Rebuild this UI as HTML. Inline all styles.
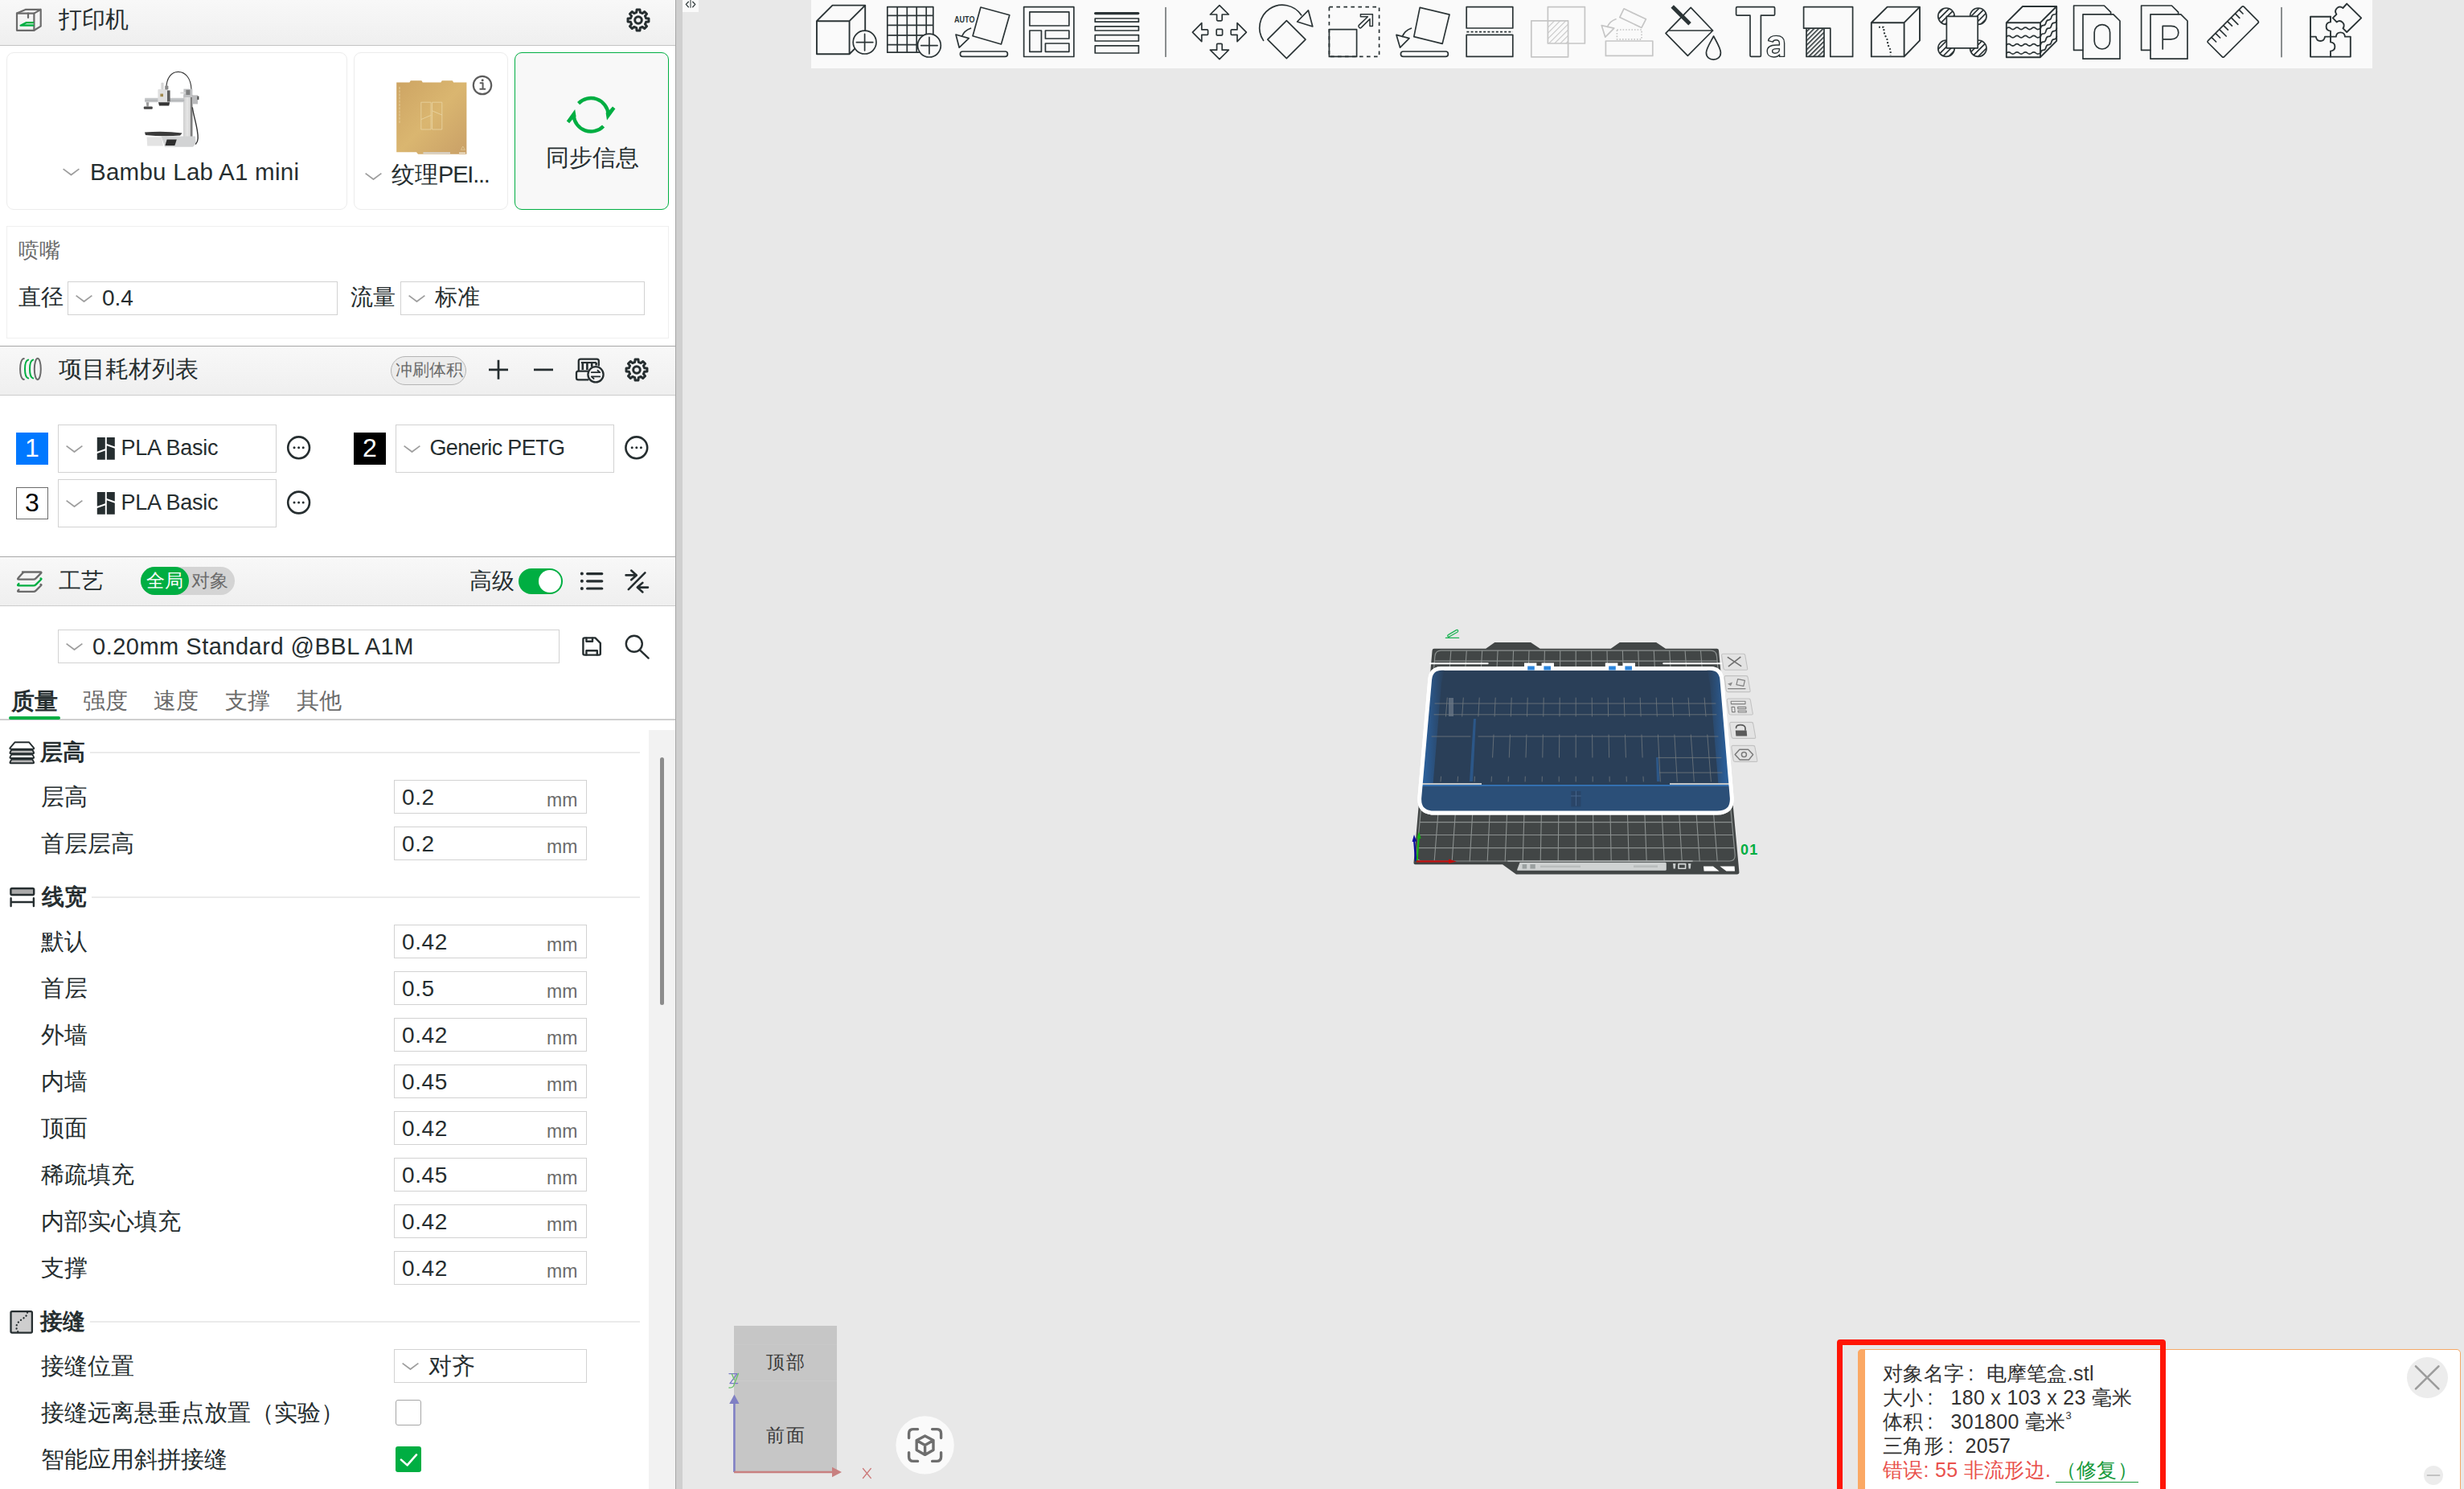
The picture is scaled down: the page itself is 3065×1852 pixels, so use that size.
<!DOCTYPE html>
<html lang="zh">
<head>
<meta charset="utf-8">
<title>Bambu Studio</title>
<style>
html,body{margin:0;padding:0}
body{width:3065px;height:1852px;overflow:hidden;position:relative;background:#e8e8e8;font-family:"Liberation Sans",sans-serif;color:#262e30}
.a{position:absolute;box-sizing:border-box}
.t{position:absolute;white-space:nowrap;line-height:1;font-size:28.6px;color:#262e30}
.g{color:#6b6b6b}
.hd{position:absolute;left:0;width:840px;background:linear-gradient(#f8f8f8,#efefef);box-sizing:border-box}
.box{position:absolute;box-sizing:border-box;border:1.5px solid #d2d2d2;background:#fff}
.card{position:absolute;box-sizing:border-box;border:1.5px solid #ececec;border-radius:9px;background:#fff}
.mm{position:absolute;white-space:nowrap;line-height:1;font-size:23px;color:#6b6b6b}
.v{letter-spacing:0.6px;font-size:28px}
.b{font-weight:bold}
.n{font-size:25px;color:#323232;letter-spacing:0.3px}
.cl{margin-left:5px}
svg{position:absolute;left:0;top:0;overflow:visible}
</style>
</head>
<body>
<!-- ===== LEFT PANEL BACKGROUND ===== -->
<div class="a" id="panel" style="left:0;top:0;width:840px;height:1852px;background:#fff"></div>
<div class="a" style="left:840px;top:0;width:1.2px;height:1852px;background:#a6a6a6"></div>
<div class="a" style="left:841.2px;top:0;width:7.8px;height:1852px;background:#cfcfcf"></div>
<div class="a" style="left:849px;top:0;width:20px;height:14.8px;background:#fafafa"></div>

<!-- header 1 -->
<div class="hd" style="top:0;height:57px;border-bottom:1.5px solid #c4c4c4"></div>
<!-- header 2 -->
<div class="hd" style="top:430px;height:62px;border-top:1.5px solid #a8a8a8;border-bottom:1.5px solid #cccccc"></div>
<!-- header 3 -->
<div class="hd" style="top:692px;height:62px;border-top:1.5px solid #a8a8a8;border-bottom:1.5px solid #cccccc"></div>

<!-- printer cards -->
<div class="card" style="left:8px;top:65px;width:424px;height:196px"></div>
<div class="card" style="left:440px;top:65px;width:192px;height:196px"></div>
<div class="card" style="left:640px;top:65px;width:192px;height:196px;border:1.8px solid #00ae42;background:#f8f8f8"></div>
<!-- nozzle box -->
<div class="a" style="left:8px;top:281px;width:824px;height:140px;border:1.5px solid #efefef;background:#fff"></div>
<div class="box" style="left:84px;top:350px;width:336px;height:42px"></div>
<div class="box" style="left:498px;top:350px;width:304px;height:42px"></div>

<!-- filament rows -->
<div class="a" style="left:20px;top:538px;width:40px;height:40px;background:#0078ff"></div>
<div class="box" style="left:72px;top:528px;width:272px;height:60px"></div>
<div class="a" style="left:440px;top:538px;width:40px;height:40px;background:#000"></div>
<div class="box" style="left:492px;top:528px;width:272px;height:60px"></div>
<div class="a" style="left:20px;top:606px;width:40px;height:40px;background:#fff;border:1.5px solid #6b6b6b"></div>
<div class="box" style="left:72px;top:596px;width:272px;height:60px"></div>

<!-- pills / toggles -->
<div class="a" style="left:486px;top:443px;width:94px;height:36px;border-radius:18px;border:1.5px solid #b4b4b4;background:#ececec"></div>
<div class="a" style="left:175px;top:705px;width:117px;height:35px;border-radius:18px;background:#d4d4d4"></div>
<div class="a" style="left:175px;top:705px;width:60px;height:35px;border-radius:18px;background:#00ae42"></div>
<div class="a" style="left:645px;top:707px;width:55px;height:32px;border-radius:16px;background:#00ae42"></div>
<div class="a" style="left:670px;top:709px;width:28px;height:28px;border-radius:14px;background:#fff"></div>

<!-- preset combo -->
<div class="box" style="left:72px;top:783px;width:624px;height:42px"></div>

<!-- tabs -->
<div class="a" style="left:0;top:894px;width:840px;height:2px;background:#cfcfcf"></div>
<div class="a" style="left:11px;top:891px;width:64px;height:4px;border-radius:2px;background:#00ae42"></div>

<!-- scroll track -->
<div class="a" style="left:807px;top:908px;width:33px;height:944px;background:#f2f2f2"></div>
<div class="a" style="left:821px;top:942px;width:5px;height:308px;border-radius:3px;background:#8c8c8c"></div>

<!-- section lines -->
<div class="a" style="left:112px;top:935px;width:684px;height:1.5px;background:#ebebeb"></div>
<div class="a" style="left:114px;top:1115px;width:682px;height:1.5px;background:#ebebeb"></div>
<div class="a" style="left:112px;top:1643px;width:684px;height:1.5px;background:#ebebeb"></div>

<!-- value boxes -->
<div class="box" style="left:490px;top:970px;width:240px;height:42px"></div>
<div class="box" style="left:490px;top:1028px;width:240px;height:42px"></div>
<div class="box" style="left:490px;top:1150px;width:240px;height:42px"></div>
<div class="box" style="left:490px;top:1208px;width:240px;height:42px"></div>
<div class="box" style="left:490px;top:1266px;width:240px;height:42px"></div>
<div class="box" style="left:490px;top:1324px;width:240px;height:42px"></div>
<div class="box" style="left:490px;top:1382px;width:240px;height:42px"></div>
<div class="box" style="left:490px;top:1440px;width:240px;height:42px"></div>
<div class="box" style="left:490px;top:1498px;width:240px;height:42px"></div>
<div class="box" style="left:490px;top:1556px;width:240px;height:42px"></div>
<div class="box" style="left:490px;top:1678px;width:240px;height:42px"></div>
<!-- checkboxes -->
<div class="a" style="left:492px;top:1741px;width:32px;height:32px;border:1.5px solid #a6a6a6;border-radius:3px;background:#fff"></div>
<div class="a" style="left:492px;top:1799px;width:32px;height:32px;border-radius:3px;background:#00ae42"></div>

<!-- ===== PANEL TEXT ===== -->
<div class="t" style="left:73px;top:10px;font-size:28.5px">打印机</div>
<div class="t" style="left:112px;top:198.5px;font-size:29.5px;letter-spacing:0.26px" id="tx_printer">Bambu Lab A1 mini</div>
<div class="t" style="left:487px;top:203px;font-size:29px" id="tx_plate">纹理<span style="letter-spacing:-1.2px">PEI...</span></div>
<div class="t" style="left:679px;top:182px;font-size:28.5px">同步信息</div>
<div class="t g" style="left:23px;top:298px;font-size:26px">喷嘴</div>
<div class="t" style="left:23px;top:356px;font-size:28px">直径</div>
<div class="t" style="left:127px;top:357px;font-size:28px" id="tx_04">0.4</div>
<div class="t" style="left:436px;top:356px;font-size:28px">流量</div>
<div class="t" style="left:541px;top:356px;font-size:28px">标准</div>

<div class="t" style="left:73px;top:445px;font-size:28.7px">项目耗材列表</div>
<div class="t g" style="left:492px;top:450px;font-size:20.5px">冲刷体积</div>

<div class="t" style="left:20px;top:541px;width:40px;text-align:center;font-size:32px;color:#fff">1</div>
<div class="t" style="left:440px;top:541px;width:40px;text-align:center;font-size:32px;color:#fff">2</div>
<div class="t" style="left:20px;top:609px;width:40px;text-align:center;font-size:32px;color:#000">3</div>
<div class="t" style="left:150.5px;top:544.4px;font-size:27px;letter-spacing:-0.25px" id="tx_pla1">PLA Basic</div>
<div class="t" style="left:534.5px;top:544.4px;font-size:27px;letter-spacing:-0.65px" id="tx_petg">Generic PETG</div>
<div class="t" style="left:150.5px;top:612.4px;font-size:27px;letter-spacing:-0.25px" id="tx_pla3">PLA Basic</div>

<div class="t" style="left:73px;top:709px;font-size:28px">工艺</div>
<div class="t" style="left:182px;top:711px;font-size:23px;color:#fff">全局</div>
<div class="t g" style="left:238px;top:711px;font-size:23px">对象</div>
<div class="t" style="left:584px;top:709px;font-size:28px">高级</div>

<div class="t" style="left:115px;top:789.5px;font-size:29px;letter-spacing:0.5px" id="tx_preset">0.20mm Standard @BBL A1M</div>

<div class="t b" style="left:14px;top:858px;font-size:28.5px">质量</div>
<div class="t g" style="left:103px;top:858px;font-size:28px">强度</div>
<div class="t g" style="left:191px;top:858px;font-size:28px">速度</div>
<div class="t g" style="left:280px;top:858px;font-size:28px">支撑</div>
<div class="t g" style="left:369px;top:858px;font-size:28px">其他</div>

<div class="t b" style="left:50px;top:922px;font-size:28px">层高</div>
<div class="t b" style="left:52px;top:1102px;font-size:28px">线宽</div>
<div class="t b" style="left:50px;top:1630px;font-size:28px">接缝</div>

<div class="t" style="left:51px;top:977px">层高</div>
<div class="t" style="left:51px;top:1035px">首层层高</div>
<div class="t" style="left:51px;top:1157px">默认</div>
<div class="t" style="left:51px;top:1215px">首层</div>
<div class="t" style="left:51px;top:1273px">外墙</div>
<div class="t" style="left:51px;top:1331px">内墙</div>
<div class="t" style="left:51px;top:1389px">顶面</div>
<div class="t" style="left:51px;top:1447px">稀疏填充</div>
<div class="t" style="left:51px;top:1505px">内部实心填充</div>
<div class="t" style="left:51px;top:1563px">支撑</div>
<div class="t" style="left:51px;top:1685px">接缝位置</div>
<div class="t" style="left:51px;top:1743px">接缝远离悬垂点放置（实验）</div>
<div class="t" style="left:51px;top:1801px">智能应用斜拼接缝</div>

<div class="t v" style="left:500px;top:978px">0.2</div><div class="mm" style="left:680px;top:984px">mm</div>
<div class="t v" style="left:500px;top:1036px">0.2</div><div class="mm" style="left:680px;top:1042px">mm</div>
<div class="t v" style="left:500px;top:1158px">0.42</div><div class="mm" style="left:680px;top:1164px">mm</div>
<div class="t v" style="left:500px;top:1216px">0.5</div><div class="mm" style="left:680px;top:1222px">mm</div>
<div class="t v" style="left:500px;top:1274px">0.42</div><div class="mm" style="left:680px;top:1280px">mm</div>
<div class="t v" style="left:500px;top:1332px">0.45</div><div class="mm" style="left:680px;top:1338px">mm</div>
<div class="t v" style="left:500px;top:1390px">0.42</div><div class="mm" style="left:680px;top:1396px">mm</div>
<div class="t v" style="left:500px;top:1448px">0.45</div><div class="mm" style="left:680px;top:1454px">mm</div>
<div class="t v" style="left:500px;top:1506px">0.42</div><div class="mm" style="left:680px;top:1512px">mm</div>
<div class="t v" style="left:500px;top:1564px">0.42</div><div class="mm" style="left:680px;top:1570px">mm</div>
<div class="t" style="left:533px;top:1685px">对齐</div>

<!--PANEL-ICONS-START-->
<svg width="3065" height="1852" viewBox="0 0 3065 1852" fill="none" stroke-linecap="round" stroke-linejoin="round">
<defs>
<path id="chev" d="M0.6 0.6 L10.5 8 L20.4 0.6" stroke="#9e9e9e" stroke-width="1.8" fill="none" stroke-linecap="butt"/>
<g id="gear" stroke="#262e30" stroke-width="3" fill="none">
<path d="M-2.31 -9.63 L-1.94 -12.96 L1.94 -12.96 L2.31 -9.63 L5.17 -8.44 L7.79 -10.53 L10.53 -7.79 L8.44 -5.17 L9.63 -2.31 L12.96 -1.94 L12.96 1.94 L9.63 2.31 L8.44 5.17 L10.53 7.79 L7.79 10.53 L5.17 8.44 L2.31 9.63 L1.94 12.96 L-1.94 12.96 L-2.31 9.63 L-5.17 8.44 L-7.79 10.53 L-10.53 7.79 L-8.44 5.17 L-9.63 2.31 L-12.96 1.94 L-12.96 -1.94 L-9.63 -2.31 L-8.44 -5.17 L-10.53 -7.79 L-7.79 -10.53 L-5.17 -8.44 Z"/>
<circle cx="0" cy="0" r="4.3"/>
</g>
<g id="more" stroke="#262e30" fill="none">
<circle cx="0" cy="0" r="13.4" stroke-width="2.6"/>
<circle cx="-5.6" cy="0" r="1.5" fill="#262e30" stroke="none"/>
<circle cx="0" cy="0" r="1.5" fill="#262e30" stroke="none"/>
<circle cx="5.6" cy="0" r="1.5" fill="#262e30" stroke="none"/>
</g>
<g id="bbl" fill="#262e30" stroke="none">
<path d="M0 0 h10 v14.2 l-10 3.6 z M12 0 h10 v11.6 l-10 -3.6 z M0 20 l10 -3.6 v11.4 h-10 z M12 10.2 l10 3.6 v14 h-10 z"/>
</g>
</defs>

<!-- header 1: printer icon -->
<g stroke="#6b6b6b" stroke-width="2.2">
<path d="M21 16.6 H42.4 V37.8 H21 Z"/>
<path d="M21 16.6 L31.6 11.9 H50.7 V32.6 L42.4 37.8 M42.4 16.6 L50.7 11.9"/>
<path d="M35 16.6 V22"/>
</g>
<path d="M41.4 28 H32.9 L25.6 31.7 H41.4" stroke="#00ae42" stroke-width="2.2" fill="#a8e0bd"/>
<use href="#gear" x="794" y="25"/>

<!-- chevrons -->
<use href="#chev" x="78" y="209.5"/>
<use href="#chev" x="454" y="215"/>
<use href="#chev" x="94" y="367"/>
<use href="#chev" x="508" y="367"/>
<use href="#chev" x="82" y="554"/>
<use href="#chev" x="502" y="554"/>
<use href="#chev" x="82" y="622"/>
<use href="#chev" x="82" y="800"/>
<use href="#chev" x="500" y="1695"/>

<!-- info icon -->
<circle cx="600" cy="106" r="11.2" stroke="#5c5c5c" stroke-width="2.2"/>
<path d="M597.6 103.3 H600.6 V110.6 M597.3 110.8 H603.3" stroke="#5c5c5c" stroke-width="2"/>
<circle cx="600.2" cy="99.8" r="1.5" fill="#5c5c5c"/>

<!-- sync icon -->
<g id="syncA">
<path d="M719.6 128.6 A21.6 21.6 0 0 1 756.6 141.6" stroke="#00ae42" stroke-width="4.4" stroke-linecap="butt"/>
<path d="M757.4 137.8 L762 132.4 L765.4 135.2 L755 149.6 L753.6 140.6 Z" fill="#00ae42"/>
</g>
<use href="#syncA" transform="rotate(180 735.1 142.8)"/>
<!-- spool icon -->
<g stroke-width="2">
<ellipse cx="46.8" cy="459" rx="4" ry="13.2" stroke="#6b6b6b"/>
<path d="M29.8 446 C23.5 446 23.5 472 29.8 472" stroke="#6b6b6b"/>
<path d="M35.2 447.5 C29.6 449 29.6 469 35.2 470.5" stroke="#00ae42"/>
<path d="M41.2 447.5 C35.6 449 35.6 469 41.2 470.5" stroke="#00ae42"/>
</g>
<!-- plus minus -->
<path d="M608 459.8 H632 M620 447.8 V471.8 M664 459.8 H688" stroke="#262e30" stroke-width="2.7" stroke-linecap="butt"/>
<!-- AMS icon -->
<g stroke="#262e30" stroke-width="2.3">
<path d="M719.8 461 V449 Q719.8 446.6 722.2 446.6 H742.4 Q744.8 446.6 744.8 449 V454.6"/>
<path d="M722.8 451 H741.8" stroke-width="2.2" stroke-linecap="butt"/>
<path d="M724.8 451 V460 M730.4 451 V460 M736.2 451 V456.4 M741.6 451 V454.6" stroke-width="2.6" stroke-linecap="butt"/>
<path d="M731.4 472.4 H719.4 Q717 472.4 717 470 V464 Q717 461.6 719.4 461.6 H731"/>
<circle cx="741" cy="465.8" r="9.6" fill="#f3f3f3"/>
<path d="M735.8 463.2 H746.2 L743.4 460.6 M746.2 468.4 H735.8 L738.6 471" stroke-width="1.8"/>
</g>
<use href="#gear" x="792" y="460"/>

<!-- filament rows -->
<use href="#bbl" x="120.8" y="544"/>
<use href="#bbl" x="120.8" y="612"/>
<use href="#more" x="371.6" y="556.8"/>
<use href="#more" x="791.8" y="556.8"/>
<use href="#more" x="371.6" y="625"/>

<!-- process icon (layers) -->
<g stroke-width="2.4">
<path d="M28 711.5 H50 Q52.4 711.5 50.8 713.2 L44.6 719.4 Q43.4 720.6 41.6 720.6 H23.6 Q21 720.6 22.8 718.8 L28 713 Q29 711.5 30.6 711.5" stroke="#6b6b6b"/>
<path d="M50.6 719.5 Q52.2 719.6 50.8 721 L44.6 727.2 Q43.4 728.4 41.6 728.4 H23.6 Q21 728.4 22.8 726.6 L23.4 726" stroke="#00ae42"/>
<path d="M50.6 727 Q52.2 727.1 50.8 728.5 L44.6 734.7 Q43.4 735.9 41.6 735.9 H23.6 Q21 735.9 22.8 734.1 L23.4 733.5" stroke="#6b6b6b"/>
</g>
<!-- list icon -->
<g stroke="#262e30" stroke-width="3.2">
<path d="M730.6 713.6 H748.8 M730.6 722.8 H748.8 M730.6 732 H748.8"/>
<path d="M723.8 713.6 h0.1 M723.8 722.8 h0.1 M723.8 732 h0.1" stroke-width="4"/>
</g>
<!-- compare icon -->
<g stroke="#262e30" stroke-width="2.6">
<path d="M781.8 733.2 L802.4 712.4"/>
<path d="M778.6 715.4 H791.6 M785.2 709.6 L791.8 715.4 L785.2 721.2"/>
<path d="M806 730.6 H793 M799.4 724.8 L792.8 730.6 L799.4 736.4"/>
</g>
<!-- save icon -->
<g stroke="#262e30" stroke-width="2.4">
<path d="M727.2 793.4 H740.4 L746.8 799.8 V813 Q746.8 814.6 745.2 814.6 H727.2 Q725.4 814.6 725.4 813 V795 Q725.4 793.4 727.2 793.4 Z"/>
<path d="M729.4 793.6 V797.8 H737 V793.6 M729.4 814.4 V809.2 H742.8 V814.4"/>
</g>
<!-- search icon -->
<g stroke="#262e30" stroke-width="2.4">
<circle cx="788.8" cy="800.8" r="10"/>
<path d="M796.6 809.2 L806.6 818.6"/>
</g>

<!-- section icons -->
<g stroke="#262e30" stroke-width="1.9">
<path d="M18.6 923.2 H36 L42 930.2 Q42.8 931.6 41.2 931.6 H13.4 Q11.8 931.6 12.6 930.2 Z" fill="#fff"/>
<path d="M14.2 932.8 H40.4 L42 935.8 Q42.6 937.2 41 937.2 H13.6 Q12 937.2 12.6 935.8 Z" fill="#bdbdbd"/>
<path d="M14.2 938.6 H40.4 L42 941.6 Q42.6 943 41 943 H13.6 Q12 943 12.6 941.6 Z" fill="#fff"/>
<path d="M14.2 944.6 H40.4 L42 947.8 Q42.6 949.2 41 949.2 H13.6 Q12 949.2 12.6 947.8 Z" fill="#b4b4b4"/>
</g>
<g stroke="#262e30" stroke-width="2.4">
<rect x="13.4" y="1105" width="28.8" height="8" rx="1.5" fill="#ababab"/>
<path d="M13.6 1117.2 V1127 M41.9 1117.2 V1127 M13.6 1122 H41.9"/>
</g>
<g stroke="#262e30">
<rect x="13.5" y="1631.2" width="26.4" height="26.4" rx="1.5" fill="#cecece" stroke-width="2.3"/>
<path d="M34 1632.6 C34 1640 20.6 1641.5 20.4 1650.4 C20.3 1653 21.5 1655 22.6 1657" stroke-width="2.3" stroke-dasharray="0.1 4.1"/>
</g>
<!-- checkmark -->
<path d="M499 1815.6 L506.6 1822.4 L518 1809.4" stroke="#fff" stroke-width="2.6"/>
</svg>

<!--PANEL-ICONS-END-->
<!--IMGS-START-->
<svg width="3065" height="1852" viewBox="0 0 3065 1852" fill="none" stroke-linecap="round" stroke-linejoin="round">
<defs>
<linearGradient id="gold" x1="0" y1="0" x2="1" y2="1"><stop offset="0" stop-color="#cda463"/><stop offset="0.5" stop-color="#dab670"/><stop offset="1" stop-color="#c9a067"/></linearGradient>
<linearGradient id="col" x1="0" y1="0" x2="1" y2="0"><stop offset="0" stop-color="#cfcfcf"/><stop offset="0.45" stop-color="#e6e6e6"/><stop offset="0.75" stop-color="#d2d2d2"/><stop offset="0.8" stop-color="#777"/><stop offset="1" stop-color="#8c8c8c"/></linearGradient>
</defs>
<!-- printer thumbnail -->
<g>
<path d="M206.8 110 C207 97 213 89.4 221.6 89.3 C231 89.2 237.6 98 238 111" stroke="#3c3c3c" stroke-width="1.2"/>
<rect x="228" y="118" width="11.6" height="54" fill="url(#col)"/>
<path d="M228.4 110.6 H239.4 V121 H228.4 Z" fill="#bfc0c2"/>
<path d="M224.4 114.6 H231 V116.4 H224.4 Z" fill="#d8d8d8"/>
<path d="M231.4 111.8 H236.4 V118 H231.4 Z" fill="#4a4a4a" fill-opacity="0.55"/>
<rect x="239.4" y="118.4" width="6.6" height="11" fill="#b9babc"/>
<rect x="245.4" y="119.6" width="2" height="4.4" fill="#4c4c4c"/>
<rect x="180.2" y="121.8" width="49" height="5.4" fill="#c6c8ca"/>
<rect x="180.2" y="124.4" width="49" height="1" fill="#a9abad"/>
<rect x="196.4" y="111" width="11.6" height="16.2" rx="1" fill="#e0e0e0"/>
<rect x="208" y="112.4" width="3.6" height="14" fill="#5c5c5c"/>
<rect x="200.4" y="102.8" width="3.2" height="8.4" rx="1" fill="#d6d6d6"/>
<rect x="205.2" y="106.6" width="4.2" height="5" rx="1" fill="#8a8a8a"/>
<rect x="199.4" y="116.6" width="3.6" height="3.6" fill="#a08a50"/>
<path d="M197 127.2 H211.2 L210.2 131.4 H198 Z" fill="#343434"/>
<path d="M181.8 127.2 H185.4 L184.8 132.6 H182.4 Z" fill="#9a9a9a"/>
<rect x="178.8" y="132.4" width="11" height="3.4" rx="1" fill="#474747"/>
<path d="M180 164.6 Q203 162.6 226.6 165.4 L224 168.6 Q203 170.2 181 168 Z" fill="#3b3b3b"/>
<path d="M182.6 170.4 H201 L203 181.6 H183.2 Z" fill="#e3e3e3"/>
<path d="M200.6 169.4 H243 L243.8 178.4 L240 182.8 H205 Z" fill="#d2d3d4"/>
<path d="M207.6 173.4 H219.8 L217.4 181 H205.4 Z" fill="#2e2e2e"/>
<path d="M239.4 134 C241 146 246.6 160 246.2 172 C246 176 244.6 178 243.6 179" stroke="#333" stroke-width="1.4"/>
</g>
<!-- plate thumbnail -->
<path d="M493.2 102.6 H509.4 L510.8 100.2 H524.4 L525.8 102.6 H548.4 L549.8 100.2 H562.8 L564.2 102.6 H580.4 V191.8 H520 L518 189.2 H493.2 Z" fill="url(#gold)"/>
<path d="M524.2 127.2 H536 V161 H524.2 Z M538 127.2 H549.8 V161 H538 Z M524.2 148.4 L536 143.4 M538 138 L549.8 143" stroke="#ead5a4" stroke-width="0.8"/>
<rect x="526.4" y="189.4" width="33.6" height="1.9" fill="#d9d9d9"/>
<rect x="571" y="189.6" width="8" height="1.4" fill="#f0e8d8"/>
<path d="M573.6 186 L575.8 182 L578.2 186 Z" stroke="#ead5a4" stroke-width="0.6"/>
<path d="M497 108 V154" stroke="#e3cc98" stroke-width="1.1" stroke-dasharray="3 1.2" stroke-linecap="butt"/>
</svg>

<!--IMGS-END-->

<!--TOOLBAR-START-->
<!-- ===== VIEWPORT ===== -->
<div class="a" style="left:1009px;top:0;width:1942px;height:85px;background:#fafafa"></div>
<svg width="3065" height="1852" viewBox="0 0 3065 1852" fill="none" stroke="#2b3436" stroke-width="1.7" stroke-linecap="round" stroke-linejoin="round">
<defs>
<pattern id="hatch" width="4" height="4" patternUnits="userSpaceOnUse" patternTransform="rotate(-45)"><rect width="4" height="1.6" fill="#2b3436" stroke="none"/></pattern>
<pattern id="hatch2" width="5.2" height="5.2" patternUnits="userSpaceOnUse" patternTransform="rotate(-45)"><rect width="5.2" height="1.7" fill="#2b3436" stroke="none"/></pattern>
<pattern id="hatchg" width="5" height="5" patternUnits="userSpaceOnUse" patternTransform="rotate(-45)"><rect width="5" height="1.1" fill="#c4c4c4" stroke="none"/></pattern>
</defs>
<!-- splitter collapse glyph -->
<path d="M856.4 2.2 L853.3 5.4 L856.4 8.7 M861.7 2.2 L864.8 5.4 L861.7 8.7" stroke="#333c3e" stroke-width="1.3"/><path d="M859 0 V9.7" stroke="#8a9090" stroke-width="1.9" stroke-linecap="butt"/>

<!-- 1 add cube -->
<path d="M1016 26.2 H1056.6 V67.2 H1016 Z M1016 26.2 L1035.5 6.6 H1076.2 L1056.6 26.2 M1076.2 6.6 V38 M1056.6 67.2 L1063.5 60.4" stroke-width="1.9"/>
<circle cx="1075.6" cy="52.6" r="14.4" fill="#fafafa"/>
<path d="M1065.4 52.6 H1085.8 M1075.6 42.4 V62.8"/>
<!-- 2 grid plus -->
<path d="M1103.8 8.6 H1160.8 V65.2 H1103.8 Z M1116.2 8.6 V65.2 M1128.3 8.6 V65.2 M1140.2 8.6 V65.2 M1152.2 8.6 V65.2 M1103.8 19.4 H1160.8 M1103.8 31.4 H1160.8 M1103.8 43.8 H1160.8 M1103.8 55.6 H1160.8"/>
<circle cx="1155.9" cy="56.6" r="14.4" fill="#fafafa"/>
<path d="M1145.7 56.6 H1166.1 M1155.9 46.4 V66.8"/>
<!-- 3 auto orient -->
<path d="M1219.9 9 L1255.8 18.8 L1245.4 55 L1210 44.8 Z"/>
<path d="M1207.4 35.2 Q1199.5 38 1196.6 45"/>
<path d="M1189 43 L1205.2 47.6 L1193.2 59.2 Z"/>
<rect x="1194.4" y="64" width="59" height="6.4" rx="3.2"/>
<!-- 4 arrange -->
<path d="M1273.6 8.6 H1335.8 V70.5 H1273.6 Z M1280.8 14.8 H1329.8 V32 H1280.8 Z M1280.8 38 H1295.4 V64.3 H1280.8 Z M1300.4 38 H1329.8 V48 H1300.4 Z M1300.4 54 H1329.8 V64.3 H1300.4 Z"/>
<!-- 5 lines -->
<path d="M1362.6 16.6 H1415.8" stroke-width="3.2"/>
<path d="M1362.2 23 H1416.4 V27.2 H1362.2 Z M1362.2 32.8 H1416.4 V38 H1362.2 Z M1362.2 43.6 H1416.4 V51 H1362.2 Z M1362.2 56.8 H1416.4 V66 H1362.2 Z"/>
<!-- sep -->
<path d="M1450 9.4 V70.4" stroke="#5a5f60" stroke-width="1.4"/>
<!-- 6 move -->
<g id="arr">
<path d="M1516.9 6.6 L1528.4 18 H1520.2 V24.6 Q1520.2 25.8 1519 25.8 H1514.8 Q1513.6 25.8 1513.6 24.6 V18 H1505.4 Z"/>
</g>
<use href="#arr" transform="rotate(90 1516.9 40.1)"/>
<use href="#arr" transform="rotate(180 1516.9 40.1)"/>
<use href="#arr" transform="rotate(270 1516.9 40.1)"/>
<rect x="1513.2" y="36.4" width="7.4" height="7.4" rx="1"/>
<!-- 7 rotate -->
<path d="M1600.4 25.6 L1624 49.1 L1600.4 72.6 L1576.8 49.1 Z"/>
<path d="M1571.6 50.4 A28.3 28.3 0 1 1 1618.7 18.8"/>
<path d="M1627.4 12.8 L1632.8 33 L1613.6 27 Z"/>
<!-- 8 scale -->
<path d="M1653.4 8.6 H1715.6 V70.4 H1653.4 Z" stroke-dasharray="4.6 4.4" stroke-linecap="butt"/>
<path d="M1653.4 36.6 H1687.6 V70.4 H1653.4 Z"/>
<path d="M1692.4 17.8 H1707.4 V32.4 H1704 V23.6 L1693.2 34.4 Q1692 35.4 1691 34.4 L1690.2 33.4 Q1689.4 32.4 1690.4 31.4 L1701.4 20.8 H1692.4 Z" stroke-width="1.5"/>
<!-- 9 lay on face -->
<path d="M1766.2 9.4 L1803 18.2 L1794.2 54.4 L1758.8 45.6 Z"/>
<path d="M1755.4 35.2 Q1747.4 38 1744.4 45.4"/>
<path d="M1737 43.4 L1753 47.6 L1741.6 59.2 Z"/>
<rect x="1742.4" y="64" width="59" height="6.4" rx="3.2"/>
<!-- 10 cut -->
<path d="M1824.2 8.6 H1881.8 V35 H1824.2 Z M1824.2 43.4 H1881.8 V70.4 H1824.2 Z"/>
<path d="M1824.4 39.6 H1881.8" stroke-dasharray="3 2.2" stroke-width="1.9" stroke-linecap="butt"/>
<!-- 11 boolean (disabled) -->
<g stroke="#c6c6c6">
<rect x="1925.4" y="25.8" width="25" height="28.2" fill="url(#hatchg)" stroke="none"/>
<path d="M1925.4 8.6 H1971.4 V54 H1925.4 Z M1904.8 25.8 H1950.6 V70.8 H1904.8 Z"/>
<!-- 12 assembly (disabled) -->
<path d="M1997.4 51 H2055.8 V69.4 H1997.4 Z"/>
<path d="M2011.4 37 H2042 V48.8 H2011.4 Z" stroke-dasharray="1.6 2" stroke-linecap="butt"/>
<path d="M2020 10.8 L2047.4 23.8 L2042 34.4 L2014.8 21.6 Z"/>
<path d="M2010 23.8 Q2002.4 26.4 1999.6 33.4"/>
<path d="M1992.2 31.6 L2007.8 35.2 L1996.8 46.2 Z"/>
</g>
<!-- 13 paint bucket -->
<path d="M2103.2 9.4 L2130.6 38 L2099.4 69.4 L2072 41.4 Z M2075.4 38 H2130.6"/>
<path d="M2080.2 8 L2102 29.8" stroke-width="5" stroke-linecap="butt"/>
<path d="M2131.6 45 C2136.4 54 2140.4 60.4 2140.4 65.6 C2140.4 71 2136.4 74.2 2131.4 74.2 C2126.4 74.2 2122.4 71 2122.4 65.6 C2122.4 60.4 2126.8 54 2131.6 45 Z"/>
<!-- 14 text -->
<path d="M2161 8.6 H2206.2 Q2207.6 8.6 2207.6 10 V17.8 Q2207.6 19.2 2206.2 19.2 H2190.4 V69 Q2190.4 70.4 2189 70.4 H2178.4 Q2177 70.4 2177 69 V19.2 H2161 Q2159.6 19.2 2159.6 17.8 V10 Q2159.6 8.6 2161 8.6 Z"/>
<path d="M2199.6 50.6 C2200.4 46.6 2204 44.4 2209.4 44.4 C2216 44.4 2219.6 47.4 2219.6 53.4 V70.4 H2213.6 V68 C2212 70 2209.4 71 2206.4 71 C2201.4 71 2198.2 68.2 2198.2 63.8 C2198.2 58.4 2202.4 56 2209.4 56 H2213.4 V53.8 C2213.4 51 2212 49.8 2209.2 49.8 C2207 49.8 2205.8 50.6 2205.2 52.2 Z M2213.4 60.6 H2210 C2206.4 60.6 2204.6 61.6 2204.6 63.6 C2204.6 65.2 2205.8 66.2 2207.8 66.2 C2211 66.2 2213.4 64.4 2213.4 61.8 Z" stroke-width="1.4"/>
<!-- 15 support -->
<rect x="2247" y="35.4" width="22" height="35" fill="url(#hatch)" stroke="none"/>
<path d="M2243.6 8.6 H2304.6 V70.4 H2276.8 V35.2 H2243.6 Z M2247 35.4 V70.4 H2269 V35.4"/>
<!-- 16 seam cube -->
<path d="M2327.8 28.2 H2368.6 V70.4 H2327.8 Z M2327.8 28.2 L2347.6 8.6 H2388 L2368.6 28.2 M2388 8.6 V50.4 L2368.6 70.4" stroke-width="1.9"/>
<path d="M2337 33.8 H2343 C2343.6 38 2343.4 42 2346 46 C2349 50.6 2347 54 2349.6 58 C2352 61.6 2351.6 65 2351.8 68.6" stroke-dasharray="1.9 2.3" stroke-width="2.1" stroke-linecap="butt"/>
<!-- 17 brim ears -->
<g>
<circle cx="2421" cy="20.2" r="10.2" fill="url(#hatch2)"/><circle cx="2460.8" cy="20.2" r="10.2" fill="url(#hatch2)"/><circle cx="2421" cy="60.2" r="10.2" fill="url(#hatch2)"/><circle cx="2460.8" cy="60.2" r="10.2" fill="url(#hatch2)"/>
<rect x="2421.4" y="20.4" width="38.8" height="39.4" fill="#fafafa"/>
</g>
<!-- 18 fuzzy cube -->
<path d="M2495.8 28.2 H2538 V71.2 H2495.8 Z M2495.8 28.2 L2516 8 H2558.2 L2538 28.2 M2558.2 8 V50.8 L2538 71.2" stroke-width="1.9"/>
<g stroke-width="1.7">
<path d="M2496 35.4 q2.6 -2.4 5.2 0 t5.2 0 t5.2 0 t5.2 0 t5.2 0 t5.2 0 t5.2 0 t5.2 0"/>
<path d="M2496 45.6 q2.6 -2.4 5.2 0 t5.2 0 t5.2 0 t5.2 0 t5.2 0 t5.2 0 t5.2 0 t5.2 0"/>
<path d="M2496 55.8 q2.6 -2.4 5.2 0 t5.2 0 t5.2 0 t5.2 0 t5.2 0 t5.2 0 t5.2 0 t5.2 0"/>
<path d="M2496 66 q2.6 -2.4 5.2 0 t5.2 0 t5.2 0 t5.2 0 t5.2 0 t5.2 0 t5.2 0 t5.2 0"/>
<path d="M2538.4 35 q0.6 -3.6 3.2 -3.4 t3.4 -3.4 t3.4 -3.4 t3.4 -3.4 t3.4 -3.4 t3.2 -3.4"/>
<path d="M2538.4 45.4 q0.6 -3.6 3.2 -3.4 t3.4 -3.4 t3.4 -3.4 t3.4 -3.4 t3.4 -3.4 t3.2 -3.4"/>
<path d="M2538.4 55.6 q0.6 -3.6 3.2 -3.4 t3.4 -3.4 t3.4 -3.4 t3.4 -3.4 t3.4 -3.4 t3.2 -3.4"/>
<path d="M2538.4 65.8 q0.6 -3.6 3.2 -3.4 t3.4 -3.4 t3.4 -3.4 t3.4 -3.4 t3.4 -3.4 t3.2 -3.4"/>
</g>
<!-- 19 O docs -->
<path d="M2590.8 62.4 H2579.6 V7 H2617.4 L2625.6 15.2 V17.6"/>
<path d="M2591 17.8 H2628.8 L2637 26 V73.2 H2591 Z"/>
<rect x="2605.2" y="30.6" width="19.4" height="30.4" rx="9.7"/>
<!-- 20 P docs -->
<path d="M2674.8 62.4 H2663.6 V7 H2701.4 L2709.6 15.2 V17.6"/>
<path d="M2675 17.8 H2712.8 L2721 26 V73.2 H2675 Z"/>
<path d="M2690.2 61 V32.4 H2700.6 C2706.4 32.4 2709.8 35.6 2709.8 40.6 C2709.8 45.6 2706.4 48.8 2700.6 48.8 H2690.2"/>
<!-- 21 ruler -->
<path d="M2788.8 8.4 Q2790 7.2 2791.2 8.4 L2808.8 26.2 Q2810 27.4 2808.8 28.6 L2766.6 70.6 Q2765.4 71.8 2764.2 70.6 L2746.6 53 Q2745.4 51.8 2746.6 50.6 Z"/>
<path d="M2751.2 46.6 L2756.6 52 M2756.2 41.6 L2761.6 47 M2761 36.8 L2769.2 45 M2766 31.8 L2771.4 37.2 M2771 26.8 L2776.4 32.2 M2775.6 22.2 L2783.8 30.4 M2780.6 17.2 L2785.8 22.4 M2785.4 12.4 L2790 17"/>
<!-- sep 2 -->
<path d="M2838 9.4 V70.8" stroke="#5a5f60" stroke-width="1.4"/>
<!-- 22 puzzle -->
<g stroke-width="1.9">
<path d="M2899 20.8 H2874 V70.6 H2923.8 V45.6 H2917 C2916.6 42 2914.4 40.4 2911.4 40.4 C2908.4 40.4 2906.2 42 2905.8 45.6 H2899"/>
<path d="M2874 45.6 H2880.8 C2881.4 49.4 2883.6 51 2886.4 51 C2889.2 51 2891.4 49.4 2892 45.6 H2899"/>
<path d="M2899 20.8 V27.4 C2895.4 27.8 2893.6 30 2893.6 33 C2893.6 36 2895.4 38.2 2899 38.6 V45.6"/>
<path d="M2899 45.6 V52.4 C2902.6 52.8 2904.4 55 2904.4 58 C2904.4 61 2902.6 63.2 2899 63.6 V70.6"/>
<path d="M2919.2 4.6 L2937.2 22.4 L2919.2 40 L2914.4 35.2 C2916.4 32.4 2916 29.8 2914 27.8 C2912 25.8 2909.2 25.4 2906.6 27.4 L2901.8 22.4 L2906.4 17.8 C2904.4 15 2904.8 12.4 2906.8 10.4 C2908.8 8.4 2911.6 8 2914.4 10 Z"/>
</g>
</svg>
<div class="t b" style="left:1187px;top:18.5px;font-size:10.5px;color:#2b3436;transform:scaleX(0.86);transform-origin:0 0;letter-spacing:0">AUTO</div>

<!--TOOLBAR-END-->
<!--SCENE-START-->
<svg width="3065" height="1852" viewBox="0 0 3065 1852" fill="none" stroke-linecap="round" stroke-linejoin="round">
<defs>
<linearGradient id="lw" x1="0" x2="1" y1="0" y2="0"><stop offset="0" stop-color="#2d6cab"/><stop offset="0.4" stop-color="#2b5c94"/><stop offset="1" stop-color="#2a3f58"/></linearGradient>
<linearGradient id="rw" x1="1" x2="0" y1="0" y2="0"><stop offset="0" stop-color="#2d6cab"/><stop offset="0.4" stop-color="#2b5c94"/><stop offset="1" stop-color="#2a3f58"/></linearGradient>
<clipPath id="mclip"><path d="M1793.5 831.4 H2127 Q2140.4 831.4 2141.8 845 L2154.2 992 Q2155.4 1011 2136 1011 H1784 Q1764.6 1011 1765.8 992 L1778.7 845 Q1780 831.4 1793.5 831.4 Z"/></clipPath>
</defs>
<path d="M1784 806.7 H1848.2 L1859.3 799.1 H1904.1 L1915.7 806.7 H2003.7 L2014.8 799.1 H2060.2 L2071.8 806.7 H2135.6 Q2137.8 806.7 2138 809 L2163.4 1084.6 Q2163.6 1087.4 2160.8 1087.4 H1886 L1869 1075.3 H1760.6 Q1758.3 1075.3 1758.5 1073 L1781.6 809 Q1781.8 806.7 1784 806.7 Z" fill="#424646"/>
<path d="M1804.9 809.2 L1784.2 1071.0 M1824.3 809.2 L1806.2 1071.0 M1843.7 809.2 L1828.2 1071.0 M1863.1 809.2 L1850.2 1071.0 M1882.6 809.2 L1872.2 1071.0 M1902.0 809.2 L1894.2 1071.0 M1921.4 809.2 L1916.2 1071.0 M1940.8 809.2 L1938.2 1071.0 M1960.2 809.2 L1960.2 1071.0 M1979.6 809.2 L1982.2 1071.0 M1999.0 809.2 L2004.2 1071.0 M2018.4 809.2 L2026.2 1071.0 M2037.8 809.2 L2048.2 1071.0 M2057.3 809.2 L2070.2 1071.0 M2076.7 809.2 L2092.2 1071.0 M2096.1 809.2 L2114.2 1071.0 M2115.5 809.2 L2136.2 1071.0 M1784.4 822.1 H2136.0 M1783.2 835.2 H2137.2 M1782.0 848.5 H2138.4 M1780.8 861.9 H2139.6 M1779.6 875.5 H2140.8 M1778.4 889.3 H2142.0 M1777.1 903.3 H2143.3 M1775.9 917.5 H2144.5 M1774.6 931.9 H2145.8 M1773.3 946.5 H2147.1 M1772.0 961.3 H2148.4 M1770.6 976.3 H2149.8 M1769.3 991.5 H2151.1 M1767.9 1007.0 H2152.5 M1766.5 1022.6 H2153.9 M1765.1 1038.5 H2155.3 M1763.7 1054.6 H2156.7" stroke="#8b908f" stroke-width="1.1"/>
<path d="M1792.5 809.2 H2127.9 Q2134.9 809.2 2135.5 816.2 L2158.2 1064.0 Q2158.2 1071.0 2151.2 1071.0 H1769.2 Q1762.2 1071.0 1762.2 1064.0 L1784.9 816.2 Q1785.5 809.2 1792.5 809.2 Z" stroke="#8b908f" stroke-width="1.2"/>
<path d="M1890.5 1072.8 H2071.4 Q2072.8 1072.8 2072.8 1074.2 V1081.4 Q2072.8 1082.8 2071.4 1082.8 H1888.4 Q1886.6 1082.8 1887.4 1081 Z" fill="#cfd2d2"/>
<path d="M1893.6 1075 h5.6 v5.6 h-5.6 z M1903.4 1075 h6.4 v5.6 h-6.4 z" fill="#9aa0a0"/>
<path d="M1916 1077.8 H1966 M2032 1077.6 H2062" stroke="#b9bdbd" stroke-width="2.6" stroke-linecap="butt"/>
<path d="M1876 1071 H2105" stroke="#b0b4b4" stroke-width="1.6"/>
<path d="M2081 1074 h3.4 l-0.6 6.4 h-2.2 z M2100 1074 h3.4 l-0.6 6.4 h-2.2 z" fill="#c8cccc"/>
<rect x="2088" y="1074.6" width="8.6" height="5.6" stroke="#d4d7d7" stroke-width="1.6"/>
<path d="M2119 1077.4 H2131 L2138.6 1083.6 H2119.6 Z M2139.4 1077.4 H2157.6 L2158 1083.6 H2147.4 Z" fill="#ffffff"/>
<path d="M1779 825.3 H1850.7 M2069.2 825.3 H2141.3" stroke="#ffffff" stroke-width="2"/>
<path d="M1896 833 V824.4 H1911.4 V828 H1917.6 V824.4 H1933 V833 Z M1996.8 833 V824.4 H2012.4 V828 H2018.6 V824.4 H2034 V833 Z" fill="#ffffff"/>
<path d="M1793.5 831.4 H2127 Q2140.4 831.4 2141.8 845 L2154.2 992 Q2155.4 1011 2136 1011 H1784 Q1764.6 1011 1765.8 992 L1778.7 845 Q1780 831.4 1793.5 831.4 Z" fill="#2a3f58" stroke="#ffffff" stroke-width="4.8"/>
<g clip-path="url(#mclip)">
<path d="M1760 831 H1797 L1793 850 L1782.5 976 H1760 Z" fill="url(#lw)"/>
<path d="M2160 831 H2123 L2127 850 L2137.5 976 H2160 Z" fill="url(#rw)"/>
<path d="M1785 875 H2134 M1784 888.8 H2135 M1839 916 H2137 M1781 916 H1829 M2062 942.4 H2141 M2064 961 H2142 M1800.3 868 L1798.4 891 M1820.3 868 L1818.7 891 M1840.2 868 L1838.9 891 M1860.2 868 L1859.1 891 M1880.2 868 L1879.3 891 M1900.2 868 L1899.5 891 M1920.2 868 L1919.8 891 M1940.2 868 L1940.0 891 M1960.2 868 L1960.2 891 M1980.2 868 L1980.4 891 M2000.2 868 L2000.6 891 M2020.2 868 L2020.9 891 M2040.2 868 L2041.1 891 M2060.2 868 L2061.3 891 M2080.2 868 L2081.5 891 M2100.1 868 L2101.7 891 M2120.1 868 L2122.0 891 M1858.0 914 L1856.6 942 M1878.4 914 L1877.3 942 M1898.9 914 L1898.0 942 M1919.3 914 L1918.8 942 M1939.8 914 L1939.5 942 M1960.2 914 L1960.2 942 M1980.6 914 L1980.9 942 M2001.1 914 L2001.6 942 M2021.5 914 L2022.4 942 M2042.0 914 L2043.1 942 M2062.4 914 L2063.8 942 M2082.9 914 L2084.5 942 M2103.3 914 L2105.3 942 M2123.8 914 L2126.0 942 M2063.8 942 L2065.3 972 M2084.5 942 L2086.3 972 M2105.3 942 L2107.3 972 M2126.0 942 L2128.4 972 M1792.5 966 L1792.0 972 M1813.5 966 L1813.1 972 M1834.4 966 L1834.1 972 M1855.4 966 L1855.1 972 M1876.4 966 L1876.1 972 M1897.3 966 L1897.1 972 M1918.3 966 L1918.2 972 M1939.2 966 L1939.2 972 M1960.2 966 L1960.2 972 M1981.2 966 L1981.2 972 M2002.1 966 L2002.2 972 M2023.1 966 L2023.3 972 M2044.0 966 L2044.3 972" stroke="#6f777d" stroke-width="1" stroke-opacity="0.85"/>
<path d="M1833 894 L1836 894 L1832 972 L1828 972 Z M2060 942 L2062.5 942 L2064.5 972 L2061 972 Z" fill="#2c5788"/>
<path d="M1802 868 h6 v23 h-6 z" fill="#6f7c8a" fill-opacity="0.7"/>
<path d="M1760 976.8 H2160 V1015 H1760 Z" fill="#2b4f78"/>
<path d="M1767 976.8 H2153" stroke="#3a86d6" stroke-width="1.2"/>
<path d="M1769 975 H1843 M2077 975 H2151" stroke="#c2c4c6" stroke-width="2" stroke-linecap="butt"/>
<rect x="1954.4" y="984" width="12" height="19.4" fill="#2a4568"/>
<path d="M1960.4 984 V1002 M1954.4 990 H1966.4" stroke="#4a6a90" stroke-width="0.9"/>
</g>
<path d="M1793.5 831.4 H2127 Q2140.4 831.4 2141.8 845 L2154.2 992 Q2155.4 1011 2136 1011 H1784 Q1764.6 1011 1765.8 992 L1778.7 845 Q1780 831.4 1793.5 831.4 Z" stroke="#ffffff" stroke-width="4.8"/>
<path d="M1900.2 828.4 H1908.8 V833.6 H1900.2 Z M1920.4 828.4 H1929 V833.6 H1920.4 Z M2001.2 828.4 H2009.8 V833.6 H2001.2 Z M2021.4 828.4 H2030 V833.6 H2021.4 Z" fill="#2d86dd"/>
<path d="M1801.5 789.6 L1811.6 783.6 Q1813 783 1813.6 784.2 Q1814 785.4 1812.8 786.2 L1803 791.8 Q1801.4 792.4 1800.8 791.2 Q1800.4 790.2 1801.5 789.6 Z M1798.4 793.4 H1814.6" stroke="#1fb356" stroke-width="1.3"/>
<path d="M1761.2 1071 L1759.2 1046" stroke="#0a0aa0" stroke-width="2.2" stroke-linecap="butt"/><path d="M1756.6 1047 L1759 1038 L1762.2 1046.6 Z" fill="#0a0aa0"/>
<path d="M1762.6 1071 L1764.8 1042" stroke="#12b012" stroke-width="2" stroke-linecap="butt"/><path d="M1762.4 1042.6 L1765.2 1034.2 L1767.6 1043 Z" fill="#12b012"/>
<path d="M1762 1071.4 H1803" stroke="#c01010" stroke-width="2.2" stroke-linecap="butt"/><path d="M1802 1068.6 L1811.8 1071.4 L1802 1074 Z" fill="#c01010"/>
<path d="M2143.1 813.2 H2168.6 Q2170.6 813.2 2170.7999999999997 815.2 L2173.6 831.2 Q2174.2 833.2 2172.2 833.2 H2146.2 Q2144.2 833.2 2143.8999999999996 831.2 L2141.6 815.2 Q2141.6 813.2 2143.1 813.2 Z" fill="#e3e3e3" stroke="#c2c2c2" stroke-width="1.1"/>
<path d="M2146.5 840.6 H2172 Q2174 840.6 2174.2 842.6 L2177.0 858.6 Q2177.6 860.6 2175.6 860.6 H2149.6 Q2147.6 860.6 2147.2999999999997 858.6 L2145 842.6 Q2145 840.6 2146.5 840.6 Z" fill="#e3e3e3" stroke="#c2c2c2" stroke-width="1.1"/>
<path d="M2149.7 869 H2175.2 Q2177.2 869 2177.3999999999996 871 L2180.2 887 Q2180.7999999999997 889 2178.7999999999997 889 H2152.7999999999997 Q2150.7999999999997 889 2150.4999999999995 887 L2148.2 871 Q2148.2 869 2149.7 869 Z" fill="#e3e3e3" stroke="#c2c2c2" stroke-width="1.1"/>
<path d="M2153.1 898.4 H2178.6 Q2180.6 898.4 2180.7999999999997 900.4 L2183.6 916.4 Q2184.2 918.4 2182.2 918.4 H2156.2 Q2154.2 918.4 2153.8999999999996 916.4 L2151.6 900.4 Q2151.6 898.4 2153.1 898.4 Z" fill="#e3e3e3" stroke="#c2c2c2" stroke-width="1.1"/>
<path d="M2155.3 927.4 H2180.8 Q2182.8 927.4 2183.0 929.4 L2185.8 945.4 Q2186.4 947.4 2184.4 947.4 H2158.4 Q2156.4 947.4 2156.1 945.4 L2153.8 929.4 Q2153.8 927.4 2155.3 927.4 Z" fill="#e3e3e3" stroke="#c2c2c2" stroke-width="1.1"/>
<path d="M2149.4 817.6 L2165.6 828.4 M2164.8 817.4 L2150.4 828.6" stroke="#707070" stroke-width="1.7"/>
<path d="M2161.6 844.6 L2170.4 846.4 L2168.8 853.4 L2160 851.6 Z M2149.6 856.6 H2171" stroke="#808080" stroke-width="1.2"/><path d="M2149 850.4 L2155 848.6 L2153 853.2 Z" fill="#8a8a8a"/>
<path d="M2153.2 872.2 H2171 V875.6 H2153.4 Z M2154 879.4 H2157.6 L2158.2 885.6 H2154.6 Z M2161.6 879.4 H2171.8 V881.6 H2161.8 Z M2162 884 H2172.2 V886 H2162.2 Z" stroke="#808080" stroke-width="1.1"/>
<path d="M2158.8 908.6 H2172.6 L2173.2 915.4 H2159.4 Z" fill="#5a5a5a"/><path d="M2159.6 905.4 Q2159.4 901.6 2165 901.6 Q2170.6 901.6 2171 905.6 V908" stroke="#5a5a5a" stroke-width="1.7"/>
<path d="M2158.2 938.6 L2163.8 932.2 H2174.6 L2180.6 938.6 L2175.4 945 H2164.2 Z" stroke="#7a7a7a" stroke-width="1.5"/><circle cx="2169.4" cy="938.6" r="3" stroke="#7a7a7a" stroke-width="1.5"/>
</svg>
<div class="t b" style="left:2165px;top:1047.5px;font-size:18px;color:#00ae42;letter-spacing:1.2px">01</div>
<!--SCENE-END-->
<!--BOTTOM-START-->
<!-- ===== view cube ===== -->
<div class="a" style="left:913px;top:1649px;width:128px;height:182px;background:#c6c6c6"></div>
<div class="a" style="left:913px;top:1717px;width:128px;height:1px;background:#cbcbcb"></div>
<div class="a" style="left:913px;top:1672px;width:128px;height:1px;background:#c9c9c9"></div>
<div class="t" style="left:913px;top:1683px;width:128px;text-align:center;font-size:23px;letter-spacing:2px;text-indent:2px;color:#3c3c3c">顶部</div>
<div class="t" style="left:913px;top:1774px;width:128px;text-align:center;font-size:23px;letter-spacing:2px;text-indent:2px;color:#3c3c3c">前面</div>
<svg width="3065" height="1852" viewBox="0 0 3065 1852" fill="none" stroke-linecap="round" stroke-linejoin="round">
<path d="M913.4 1831 V1745" stroke="#8080c4" stroke-width="2.6" stroke-linecap="butt"/>
<path d="M907.2 1746 L913.4 1734.6 L919.6 1746 Z" fill="#8080c4"/>
<path d="M913 1831 H1036" stroke="#c88080" stroke-width="2.6" stroke-linecap="butt"/>
<path d="M1035 1824.8 L1047 1831 L1035 1837.2 Z" fill="#c88080"/>
<path d="M1073.6 1826.6 L1083.2 1838.4 M1083.2 1826.6 L1073.6 1838.4" stroke="#cc7878" stroke-width="1.5"/>
<path d="M907 1708.6 H917 L908 1720.6 H917.6" stroke="#7878c8" stroke-width="1.4"/>
<path d="M910.4 1709 L913.4 1716 M918.4 1708.4 L912.4 1724 Q911 1726.6 907 1726" stroke="#6cc06c" stroke-width="1.4"/>
<!-- round button -->
<circle cx="1150.6" cy="1797.4" r="36.2" fill="#fafafa"/>
<g stroke="#6e6e6e" stroke-width="3.4">
<path d="M1130.6 1788.6 V1783 Q1130.6 1777.6 1136 1777.6 H1141.6 M1159.6 1777.6 H1165.2 Q1170.6 1777.6 1170.6 1783 V1788.6 M1170.6 1806.6 V1812 Q1170.6 1817.4 1165.2 1817.4 H1159.6 M1141.6 1817.4 H1136 Q1130.6 1817.4 1130.6 1812 V1806.6"/>
<path d="M1150.6 1786 L1161 1791.6 V1803.6 L1150.6 1809.4 L1140.2 1803.6 V1791.6 Z M1140.6 1791.8 L1150.6 1797.4 L1160.6 1791.8 M1150.6 1797.4 V1809"/>
</g>
</svg>

<!-- ===== notification ===== -->
<div class="a" style="left:2311px;top:1678px;width:750px;height:190px;background:#fff;border:1.5px solid #f6a866;border-radius:5px 5px 0 0"></div>
<div class="a" style="left:2311px;top:1678px;width:9px;height:190px;background:#fba864;border-radius:5px 0 0 0"></div>
<div class="a" style="left:2993.5px;top:1687.5px;width:51px;height:51px;border-radius:26px;background:#ececec"></div>
<div class="a" style="left:3015px;top:1823px;width:24px;height:24px;border-radius:12px;background:#ececec"></div>
<svg width="3065" height="1852" viewBox="0 0 3065 1852" fill="none" stroke-linecap="round">
<path d="M3005 1699.4 L3033.4 1727.4 M3033.4 1699.4 L3005 1727.4" stroke="#9c9c9c" stroke-width="2.6"/>
<path d="M3019.4 1835 H3034.6" stroke="#b4b4b4" stroke-width="1.6"/>
</svg>
<div class="t n" style="left:2342px;top:1695.5px">对象名字<span class="cl">:</span></div><div class="t n" style="left:2470.5px;top:1695.5px">电摩笔盒.stl</div>
<div class="t n" style="left:2342px;top:1725.5px">大小<span class="cl">:</span></div><div class="t n" style="left:2426.5px;top:1725.5px">180 x 103 x 23 毫米</div>
<div class="t n" style="left:2342px;top:1755.5px">体积<span class="cl">:</span></div><div class="t n" style="left:2426.5px;top:1755.5px">301800 毫米<span style="font-size:13px;position:relative;top:-12px">3</span></div>
<div class="t n" style="left:2342px;top:1785.5px">三角形<span class="cl">:</span></div><div class="t n" style="left:2444.5px;top:1785.5px">2057</div>
<div class="t n" style="left:2342px;top:1815.5px;color:#e9504c">错误: 55 非流形边.</div>
<div class="t n" style="left:2557px;top:1815.5px;width:103px;text-align:center;color:#189a3c;border-bottom:1.6px solid #189a3c;padding-bottom:2.5px">（修复）</div>
<!-- red annotation rectangle -->
<div class="a" style="left:2284.5px;top:1666px;width:409.5px;height:200px;border:7.2px solid #ff1505;border-radius:4px"></div>

<!--BOTTOM-END-->

</body>
</html>
